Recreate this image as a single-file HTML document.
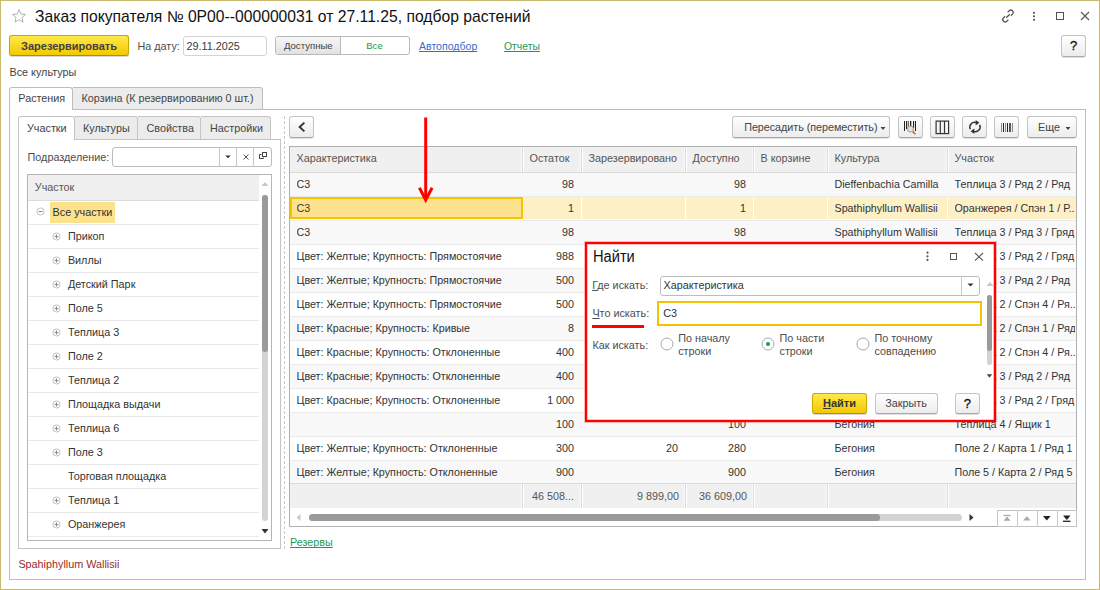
<!DOCTYPE html>
<html><head><meta charset="utf-8"><style>
html,body{margin:0;padding:0;}
body{width:1100px;height:590px;position:relative;overflow:hidden;background:#fff;font-family:"Liberation Sans",sans-serif;}
.b{position:absolute;}
.t{position:absolute;white-space:nowrap;font-family:"Liberation Sans",sans-serif;}
svg.b{overflow:visible;}
</style></head><body>
<div class="b" style="left:0px;top:0px;width:1100px;height:590px;border:1px solid #c8b870;box-sizing:border-box;background:#fff;"></div>
<svg class="b" style="left:11px;top:8px;" width="16" height="16" viewBox="0 0 16 16"><path d="M8 1.6 L9.9 6.1 L14.6 6.4 L11 9.5 L12.1 14.2 L8 11.6 L3.9 14.2 L5 9.5 L1.4 6.4 L6.1 6.1 Z" fill="none" stroke="#aeb3b8" stroke-width="1"/></svg>
<div class="t " style="left:35px;top:8.14px;font-size:15.7px;line-height:18.84px;color:#111;font-weight:normal;">Заказ покупателя № 0P00--000000031 от 27.11.25, подбор растений</div>
<svg class="b" style="left:1000px;top:8px;" width="16" height="16" viewBox="0 0 16 16"><g fill="none" stroke="#555" stroke-width="1.3"><path d="M6.2 9.8 L9.8 6.2"/><path d="M7.6 4.4 L9.2 2.8 a2.3 2.3 0 0 1 3.3 3.3 L10.9 7.7"/><path d="M5.1 8.3 L3.5 9.9 a2.3 2.3 0 0 0 3.3 3.3 L8.4 11.6"/></g></svg>
<svg class="b" style="left:1031px;top:11px;" width="6" height="11" viewBox="0 0 6 11"><g fill="#555"><circle cx="3" cy="1.8" r="1.1"/><circle cx="3" cy="5.3" r="1.1"/><circle cx="3" cy="8.8" r="1.1"/></g></svg>
<div class="b" style="left:1056px;top:12px;width:8px;height:8px;border:1.3px solid #555;box-sizing:border-box;"></div>
<svg class="b" style="left:1080px;top:11px;" width="10" height="10" viewBox="0 0 10 10"><path d="M1 1 L9 9 M9 1 L1 9" stroke="#555" stroke-width="1.1"/></svg>
<div class="b" style="left:9px;top:35px;width:120px;height:21px;background:linear-gradient(#ffe94a,#f2c900);border:1px solid #c9a800;border-bottom-color:#b09000;border-radius:3px;box-shadow:0 1px 0 rgba(0,0,0,0.15);box-sizing:border-box;"></div>
<div class="t" style="left:-131px;width:400px;text-align:center;top:39.59px;font-size:11px;line-height:13.2px;color:#404040;font-weight:bold;">Зарезервировать</div>
<div class="t " style="left:137.5px;top:39.88px;font-size:10.8px;line-height:12.96px;color:#4d4d4d;font-weight:normal;">На дату:</div>
<div class="b" style="left:183px;top:36px;width:84px;height:20px;border:1px solid #d3d3d3;border-radius:3px;box-sizing:border-box;"></div>
<div class="t " style="left:186.6px;top:39.88px;font-size:10.8px;line-height:12.96px;color:#3a3a3a;font-weight:normal;">29.11.2025</div>
<div class="b" style="left:275px;top:36px;width:135px;height:18.5px;border:1px solid #b9b9b9;border-radius:3px;box-sizing:border-box;background:#fff;"></div>
<div class="b" style="left:276px;top:37px;width:64px;height:16.5px;background:linear-gradient(#f7f7f7,#e2e2e2);border-radius:2px 0 0 2px;"></div>
<div class="b" style="left:340px;top:37px;width:1px;height:16.5px;background:#b9b9b9;"></div>
<div class="t" style="left:108.30000000000001px;width:400px;text-align:center;top:40.11px;font-size:9.6px;line-height:11.52px;color:#444;font-weight:normal;">Доступные</div>
<div class="t" style="left:174.5px;width:400px;text-align:center;top:40.11px;font-size:9.6px;line-height:11.52px;color:#22994a;font-weight:normal;">Все</div>
<div class="t " style="left:419px;top:40.41px;font-size:10.55px;line-height:12.66px;color:#3a6bc9;font-weight:normal;text-decoration:underline;text-decoration-skip-ink:none;">Автоподбор</div>
<div class="t " style="left:504px;top:40.56px;font-size:10.4px;line-height:12.48px;color:#1c9955;font-weight:normal;text-decoration:underline;text-decoration-skip-ink:none;">Отчеты</div>
<div class="b" style="left:1061px;top:35px;width:25px;height:21.5px;background:linear-gradient(#ffffff,#ececec);border:1px solid #c4c4c4;border-bottom-color:#a9a9a9;border-radius:3px;box-shadow:0 1px 0 rgba(0,0,0,0.12);box-sizing:border-box;"></div>
<div class="t" style="left:873.7px;width:400px;text-align:center;top:38.30px;font-size:13px;line-height:15.6px;color:#111;font-weight:normal;-webkit-text-stroke:0.3px #111;">?</div>
<div class="t " style="left:9.5px;top:65.78px;font-size:10.8px;line-height:12.96px;color:#444;font-weight:normal;">Все культуры</div>
<div class="b" style="left:9px;top:109px;width:1077px;height:471px;border:1px solid #bdbdbd;box-sizing:border-box;"></div>
<div class="b" style="left:9px;top:87px;width:64px;height:23px;border:1px solid #bdbdbd;border-bottom:none;border-radius:3px 3px 0 0;background:#fff;box-sizing:border-box;"></div>
<div class="b" style="left:73px;top:87px;width:190px;height:23px;border:1px solid #bdbdbd;border-left:none;border-radius:0 3px 0 0;background:#ececec;box-sizing:border-box;"></div>
<div class="t " style="left:18.3px;top:91.78px;font-size:10.8px;line-height:12.96px;color:#444;font-weight:normal;">Растения</div>
<div class="t " style="left:81.5px;top:91.78px;font-size:10.8px;line-height:12.96px;color:#444;font-weight:normal;">Корзина (К резервированию 0 шт.)</div>
<div class="b" style="left:18px;top:139px;width:263px;height:410px;border:1px solid #c4c4c4;box-sizing:border-box;"></div>
<div class="b" style="left:18px;top:116px;width:57px;height:24px;border:1px solid #c4c4c4;border-bottom:none;border-radius:3px 3px 0 0;background:#fff;box-sizing:border-box;"></div>
<div class="b" style="left:75px;top:116px;width:63px;height:23.5px;border:1px solid #c4c4c4;border-left:none;border-radius:0 3px 0 0;background:#ececec;box-sizing:border-box;"></div>
<div class="t " style="left:83px;top:121.58px;font-size:10.8px;line-height:12.96px;color:#444;font-weight:normal;">Культуры</div>
<div class="b" style="left:138px;top:116px;width:63px;height:23.5px;border:1px solid #c4c4c4;border-left:none;border-radius:0 3px 0 0;background:#ececec;box-sizing:border-box;"></div>
<div class="t " style="left:146.5px;top:121.58px;font-size:10.8px;line-height:12.96px;color:#444;font-weight:normal;">Свойства</div>
<div class="b" style="left:201px;top:116px;width:70px;height:23.5px;border:1px solid #c4c4c4;border-left:none;border-radius:0 3px 0 0;background:#ececec;box-sizing:border-box;"></div>
<div class="t " style="left:210px;top:121.58px;font-size:10.8px;line-height:12.96px;color:#444;font-weight:normal;">Настройки</div>
<div class="t " style="left:27px;top:121.58px;font-size:10.8px;line-height:12.96px;color:#444;font-weight:normal;">Участки</div>
<div class="t " style="left:27.6px;top:150.78px;font-size:10.8px;line-height:12.96px;color:#4d4d4d;font-weight:normal;">Подразделение:</div>
<div class="b" style="left:112px;top:146.5px;width:160px;height:20.0px;border:1px solid #bcbcbc;border-radius:3px;box-sizing:border-box;background:#fff;"></div>
<div class="b" style="left:219px;top:147px;width:1px;height:19px;background:#c8c8c8;"></div>
<div class="b" style="left:236px;top:147px;width:1px;height:19px;background:#c8c8c8;"></div>
<div class="b" style="left:253px;top:147px;width:1px;height:19px;background:#c8c8c8;"></div>
<svg class="b" style="left:224.5px;top:155px;" width="6" height="4" viewBox="0 0 6 4"><path d="M0.3 0.5 L5.7 0.5 L3 3.3 Z" fill="#333"/></svg>
<svg class="b" style="left:242.5px;top:153.5px;" width="6" height="6" viewBox="0 0 6 6"><path d="M0.5 0.5 L5.5 5.5 M5.5 0.5 L0.5 5.5" stroke="#555" stroke-width="1"/></svg>
<svg class="b" style="left:259px;top:152px;" width="9" height="8" viewBox="0 0 9 8"><g fill="none" stroke="#444" stroke-width="1"><rect x="3.5" y="0.5" width="4" height="4"/><path d="M2.5 2.5 H0.5 V6.5 H4.5 V5.5"/></g></svg>
<div class="b" style="left:27px;top:174px;width:245px;height:367px;border:1px solid #b5b5b5;box-sizing:border-box;background:#fff;"></div>
<div class="b" style="left:28px;top:175px;width:231px;height:25px;background:#f0f0f0;"></div>
<div class="b" style="left:28px;top:200px;width:231px;height:1px;background:#dcdcdc;"></div>
<div class="t " style="left:34.8px;top:181.18px;font-size:10.8px;line-height:12.96px;color:#555;font-weight:normal;">Участок</div>
<div class="b" style="left:28px;top:224px;width:231px;height:1px;background:#e9e9e9;"></div>
<div class="b" style="left:50px;top:202px;width:65px;height:21px;background:#fce28c;"></div>
<div class="t " style="left:52.6px;top:205.78px;font-size:10.8px;line-height:12.96px;color:#333;font-weight:normal;">Все участки</div>
<svg class="b" style="left:36px;top:207px;" width="9" height="9" viewBox="0 0 9 9"><circle cx="4.5" cy="4.5" r="3.6" fill="#fff" stroke="#c4c4c4" stroke-width="1"/><path d="M2.5 4.5 H6.5" stroke="#8c8c8c" stroke-width="1"/></svg>
<div class="b" style="left:28px;top:248px;width:231px;height:1px;background:#e9e9e9;"></div>
<div class="t " style="left:67.9px;top:229.78px;font-size:10.8px;line-height:12.96px;color:#333;font-weight:normal;">Прикоп</div>
<svg class="b" style="left:52px;top:232px;" width="9" height="9" viewBox="0 0 9 9"><circle cx="4.5" cy="4.5" r="3.6" fill="#fff" stroke="#c4c4c4" stroke-width="1"/><path d="M2.5 4.5 H6.5 M4.5 2.5 V6.5" stroke="#8c8c8c" stroke-width="1"/></svg>
<div class="b" style="left:28px;top:272px;width:231px;height:1px;background:#e9e9e9;"></div>
<div class="t " style="left:67.9px;top:253.78px;font-size:10.8px;line-height:12.96px;color:#333;font-weight:normal;">Виллы</div>
<svg class="b" style="left:52px;top:256px;" width="9" height="9" viewBox="0 0 9 9"><circle cx="4.5" cy="4.5" r="3.6" fill="#fff" stroke="#c4c4c4" stroke-width="1"/><path d="M2.5 4.5 H6.5 M4.5 2.5 V6.5" stroke="#8c8c8c" stroke-width="1"/></svg>
<div class="b" style="left:28px;top:296px;width:231px;height:1px;background:#e9e9e9;"></div>
<div class="t " style="left:67.9px;top:277.78px;font-size:10.8px;line-height:12.96px;color:#333;font-weight:normal;">Детский Парк</div>
<svg class="b" style="left:52px;top:280px;" width="9" height="9" viewBox="0 0 9 9"><circle cx="4.5" cy="4.5" r="3.6" fill="#fff" stroke="#c4c4c4" stroke-width="1"/><path d="M2.5 4.5 H6.5 M4.5 2.5 V6.5" stroke="#8c8c8c" stroke-width="1"/></svg>
<div class="b" style="left:28px;top:320px;width:231px;height:1px;background:#e9e9e9;"></div>
<div class="t " style="left:67.9px;top:301.78px;font-size:10.8px;line-height:12.96px;color:#333;font-weight:normal;">Поле 5</div>
<svg class="b" style="left:52px;top:304px;" width="9" height="9" viewBox="0 0 9 9"><circle cx="4.5" cy="4.5" r="3.6" fill="#fff" stroke="#c4c4c4" stroke-width="1"/><path d="M2.5 4.5 H6.5 M4.5 2.5 V6.5" stroke="#8c8c8c" stroke-width="1"/></svg>
<div class="b" style="left:28px;top:344px;width:231px;height:1px;background:#e9e9e9;"></div>
<div class="t " style="left:67.9px;top:325.78px;font-size:10.8px;line-height:12.96px;color:#333;font-weight:normal;">Теплица 3</div>
<svg class="b" style="left:52px;top:328px;" width="9" height="9" viewBox="0 0 9 9"><circle cx="4.5" cy="4.5" r="3.6" fill="#fff" stroke="#c4c4c4" stroke-width="1"/><path d="M2.5 4.5 H6.5 M4.5 2.5 V6.5" stroke="#8c8c8c" stroke-width="1"/></svg>
<div class="b" style="left:28px;top:368px;width:231px;height:1px;background:#e9e9e9;"></div>
<div class="t " style="left:67.9px;top:349.78px;font-size:10.8px;line-height:12.96px;color:#333;font-weight:normal;">Поле 2</div>
<svg class="b" style="left:52px;top:352px;" width="9" height="9" viewBox="0 0 9 9"><circle cx="4.5" cy="4.5" r="3.6" fill="#fff" stroke="#c4c4c4" stroke-width="1"/><path d="M2.5 4.5 H6.5 M4.5 2.5 V6.5" stroke="#8c8c8c" stroke-width="1"/></svg>
<div class="b" style="left:28px;top:392px;width:231px;height:1px;background:#e9e9e9;"></div>
<div class="t " style="left:67.9px;top:373.78px;font-size:10.8px;line-height:12.96px;color:#333;font-weight:normal;">Теплица 2</div>
<svg class="b" style="left:52px;top:376px;" width="9" height="9" viewBox="0 0 9 9"><circle cx="4.5" cy="4.5" r="3.6" fill="#fff" stroke="#c4c4c4" stroke-width="1"/><path d="M2.5 4.5 H6.5 M4.5 2.5 V6.5" stroke="#8c8c8c" stroke-width="1"/></svg>
<div class="b" style="left:28px;top:416px;width:231px;height:1px;background:#e9e9e9;"></div>
<div class="t " style="left:67.9px;top:397.78px;font-size:10.8px;line-height:12.96px;color:#333;font-weight:normal;">Площадка выдачи</div>
<svg class="b" style="left:52px;top:400px;" width="9" height="9" viewBox="0 0 9 9"><circle cx="4.5" cy="4.5" r="3.6" fill="#fff" stroke="#c4c4c4" stroke-width="1"/><path d="M2.5 4.5 H6.5 M4.5 2.5 V6.5" stroke="#8c8c8c" stroke-width="1"/></svg>
<div class="b" style="left:28px;top:440px;width:231px;height:1px;background:#e9e9e9;"></div>
<div class="t " style="left:67.9px;top:421.78px;font-size:10.8px;line-height:12.96px;color:#333;font-weight:normal;">Теплица 6</div>
<svg class="b" style="left:52px;top:424px;" width="9" height="9" viewBox="0 0 9 9"><circle cx="4.5" cy="4.5" r="3.6" fill="#fff" stroke="#c4c4c4" stroke-width="1"/><path d="M2.5 4.5 H6.5 M4.5 2.5 V6.5" stroke="#8c8c8c" stroke-width="1"/></svg>
<div class="b" style="left:28px;top:464px;width:231px;height:1px;background:#e9e9e9;"></div>
<div class="t " style="left:67.9px;top:445.78px;font-size:10.8px;line-height:12.96px;color:#333;font-weight:normal;">Поле 3</div>
<svg class="b" style="left:52px;top:448px;" width="9" height="9" viewBox="0 0 9 9"><circle cx="4.5" cy="4.5" r="3.6" fill="#fff" stroke="#c4c4c4" stroke-width="1"/><path d="M2.5 4.5 H6.5 M4.5 2.5 V6.5" stroke="#8c8c8c" stroke-width="1"/></svg>
<div class="b" style="left:28px;top:488px;width:231px;height:1px;background:#e9e9e9;"></div>
<div class="t " style="left:67.9px;top:469.78px;font-size:10.8px;line-height:12.96px;color:#333;font-weight:normal;">Торговая площадка</div>
<div class="b" style="left:28px;top:512px;width:231px;height:1px;background:#e9e9e9;"></div>
<div class="t " style="left:67.9px;top:493.78px;font-size:10.8px;line-height:12.96px;color:#333;font-weight:normal;">Теплица 1</div>
<svg class="b" style="left:52px;top:496px;" width="9" height="9" viewBox="0 0 9 9"><circle cx="4.5" cy="4.5" r="3.6" fill="#fff" stroke="#c4c4c4" stroke-width="1"/><path d="M2.5 4.5 H6.5 M4.5 2.5 V6.5" stroke="#8c8c8c" stroke-width="1"/></svg>
<div class="b" style="left:28px;top:536px;width:231px;height:1px;background:#e9e9e9;"></div>
<div class="t " style="left:67.9px;top:517.78px;font-size:10.8px;line-height:12.96px;color:#333;font-weight:normal;">Оранжерея</div>
<svg class="b" style="left:52px;top:520px;" width="9" height="9" viewBox="0 0 9 9"><circle cx="4.5" cy="4.5" r="3.6" fill="#fff" stroke="#c4c4c4" stroke-width="1"/><path d="M2.5 4.5 H6.5 M4.5 2.5 V6.5" stroke="#8c8c8c" stroke-width="1"/></svg>
<svg class="b" style="left:261px;top:181px;" width="8" height="6" viewBox="0 0 8 6"><path d="M0.5 5 L4 1 L7.5 5 Z" fill="#c8c8c8"/></svg>
<div class="b" style="left:262px;top:195px;width:6px;height:326px;background:#d3d3d3;border-radius:3px;"></div>
<div class="b" style="left:262px;top:195px;width:6px;height:157px;background:#9a9a9a;border-radius:3px;"></div>
<svg class="b" style="left:261px;top:529px;" width="8" height="5" viewBox="0 0 8 5"><path d="M0.5 0 L7.5 0 L4 4.5 Z" fill="#333"/></svg>
<div class="b" style="left:284px;top:116px;width:1px;height:435px;background:repeating-linear-gradient(#c8c8c8 0 3px, transparent 3px 5px);"></div>
<div class="b" style="left:289px;top:116px;width:25px;height:22px;background:linear-gradient(#ffffff,#ececec);border:1px solid #c4c4c4;border-bottom-color:#a9a9a9;border-radius:3px;box-shadow:0 1px 0 rgba(0,0,0,0.12);box-sizing:border-box;"></div>
<svg class="b" style="left:296px;top:120px;" width="12" height="14" viewBox="0 0 12 14"><path d="M8.4 2.6 L3.6 7 L8.4 11.4" fill="none" stroke="#333" stroke-width="1.9"/></svg>
<div class="b" style="left:732px;top:116px;width:158px;height:22px;background:linear-gradient(#ffffff,#ececec);border:1px solid #c4c4c4;border-bottom-color:#a9a9a9;border-radius:3px;box-shadow:0 1px 0 rgba(0,0,0,0.12);box-sizing:border-box;"></div>
<div class="t " style="left:744.2px;top:121.28px;font-size:10.8px;line-height:12.96px;color:#444;font-weight:normal;letter-spacing:-0.05px;">Пересадить (переместить)</div>
<svg class="b" style="left:880px;top:127px;" width="6" height="4" viewBox="0 0 6 4"><path d="M0.5 0 L5.5 0 L3 3 Z" fill="#444"/></svg>
<div class="b" style="left:898px;top:116px;width:25px;height:22px;background:linear-gradient(#ffffff,#ececec);border:1px solid #c4c4c4;border-bottom-color:#a9a9a9;border-radius:3px;box-shadow:0 1px 0 rgba(0,0,0,0.12);box-sizing:border-box;"></div>
<div class="b" style="left:930px;top:116px;width:25px;height:22px;background:linear-gradient(#ffffff,#ececec);border:1px solid #c4c4c4;border-bottom-color:#a9a9a9;border-radius:3px;box-shadow:0 1px 0 rgba(0,0,0,0.12);box-sizing:border-box;"></div>
<div class="b" style="left:962px;top:116px;width:25px;height:22px;background:linear-gradient(#ffffff,#ececec);border:1px solid #c4c4c4;border-bottom-color:#a9a9a9;border-radius:3px;box-shadow:0 1px 0 rgba(0,0,0,0.12);box-sizing:border-box;"></div>
<div class="b" style="left:994px;top:116px;width:25px;height:22px;background:linear-gradient(#ffffff,#ececec);border:1px solid #c4c4c4;border-bottom-color:#a9a9a9;border-radius:3px;box-shadow:0 1px 0 rgba(0,0,0,0.12);box-sizing:border-box;"></div>
<div class="b" style="left:1027px;top:116px;width:50px;height:22px;background:linear-gradient(#ffffff,#ececec);border:1px solid #c4c4c4;border-bottom-color:#a9a9a9;border-radius:3px;box-shadow:0 1px 0 rgba(0,0,0,0.12);box-sizing:border-box;"></div>
<div class="t " style="left:1038px;top:121.28px;font-size:10.8px;line-height:12.96px;color:#444;font-weight:normal;">Еще</div>
<svg class="b" style="left:1065px;top:127px;" width="6" height="4" viewBox="0 0 6 4"><path d="M0.5 0 L5.5 0 L3 3 Z" fill="#444"/></svg>
<svg class="b" style="left:900px;top:118px;" width="20" height="18" viewBox="0 0 20 18"><g fill="#222"><rect x="4" y="3" width="1" height="10"/><rect x="6" y="3" width="1.2" height="8"/><rect x="8" y="3" width="0.9" height="6" fill="#555"/><rect x="10" y="3" width="1.3" height="5"/><rect x="13" y="3" width="1.1" height="7"/><rect x="15" y="3" width="1" height="10"/></g><path d="M12.6 13.2 L14.8 15.6" stroke="#c08050" stroke-width="2" stroke-linecap="round"/><circle cx="10.5" cy="11.1" r="2.9" fill="#d6e6ff" stroke="#c9a07a" stroke-width="1.1"/></svg>
<svg class="b" style="left:935px;top:120px;" width="15" height="15" viewBox="0 0 15 15"><g fill="none" stroke="#333" stroke-width="1.2"><rect x="1.1" y="1.1" width="12.5" height="12.5"/><path d="M5.3 1 V13.6 M9.5 1 V13.6"/></g></svg>
<svg class="b" style="left:966.5px;top:119px;" width="16" height="16" viewBox="0 0 16 16"><g fill="none" stroke="#333" stroke-width="1.5"><path d="M3.4 10.2 A4.7 4.7 0 0 1 9.2 3.6"/><path d="M12.6 5.8 A4.7 4.7 0 0 1 6.8 12.4"/></g><path d="M8.6 1 L12.4 3.7 L8.6 6.4 Z" fill="#333"/><path d="M7.4 9.6 L3.6 12.3 L7.4 15 Z" fill="#333"/></svg>
<svg class="b" style="left:996px;top:118px;" width="20" height="18" viewBox="0 0 20 18"><g><rect x="5" y="5" width="1" height="9" fill="#888"/><rect x="7" y="5" width="1" height="9" fill="#222"/><rect x="9" y="5" width="1" height="9" fill="#888"/><rect x="11" y="5" width="1" height="9" fill="#222"/><rect x="13" y="5" width="2" height="9" fill="#555"/><rect x="16" y="5" width="1" height="9" fill="#888"/></g></svg>
<div class="b" style="left:289px;top:146px;width:788px;height:381px;border:1px solid #b0b0b0;box-sizing:border-box;background:#fff;"></div>
<div class="b" style="left:290px;top:147px;width:786px;height:25px;background:#f0f0f0;"></div>
<div class="b" style="left:290px;top:172px;width:786px;height:1px;background:#d9d9d9;"></div>
<div class="b" style="left:521px;top:147px;width:1px;height:25px;background:#f8f8f8;"></div>
<div class="b" style="left:522px;top:147px;width:1px;height:25px;background:#dcdcdc;"></div>
<div class="b" style="left:523px;top:147px;width:1px;height:25px;background:#fff;"></div>
<div class="b" style="left:580px;top:147px;width:1px;height:25px;background:#f8f8f8;"></div>
<div class="b" style="left:581px;top:147px;width:1px;height:25px;background:#dcdcdc;"></div>
<div class="b" style="left:582px;top:147px;width:1px;height:25px;background:#fff;"></div>
<div class="b" style="left:684px;top:147px;width:1px;height:25px;background:#f8f8f8;"></div>
<div class="b" style="left:685px;top:147px;width:1px;height:25px;background:#dcdcdc;"></div>
<div class="b" style="left:686px;top:147px;width:1px;height:25px;background:#fff;"></div>
<div class="b" style="left:752px;top:147px;width:1px;height:25px;background:#f8f8f8;"></div>
<div class="b" style="left:753px;top:147px;width:1px;height:25px;background:#dcdcdc;"></div>
<div class="b" style="left:754px;top:147px;width:1px;height:25px;background:#fff;"></div>
<div class="b" style="left:826px;top:147px;width:1px;height:25px;background:#f8f8f8;"></div>
<div class="b" style="left:827px;top:147px;width:1px;height:25px;background:#dcdcdc;"></div>
<div class="b" style="left:828px;top:147px;width:1px;height:25px;background:#fff;"></div>
<div class="b" style="left:946px;top:147px;width:1px;height:25px;background:#f8f8f8;"></div>
<div class="b" style="left:947px;top:147px;width:1px;height:25px;background:#dcdcdc;"></div>
<div class="b" style="left:948px;top:147px;width:1px;height:25px;background:#fff;"></div>
<div class="t " style="left:296.5px;top:152.18px;font-size:10.8px;line-height:12.96px;color:#555;font-weight:normal;">Характеристика</div>
<div class="t " style="left:529.5px;top:152.18px;font-size:10.8px;line-height:12.96px;color:#555;font-weight:normal;">Остаток</div>
<div class="t " style="left:588.5px;top:152.18px;font-size:10.8px;line-height:12.96px;color:#555;font-weight:normal;">Зарезервировано</div>
<div class="t " style="left:692.5px;top:152.18px;font-size:10.8px;line-height:12.96px;color:#555;font-weight:normal;">Доступно</div>
<div class="t " style="left:760.5px;top:152.18px;font-size:10.8px;line-height:12.96px;color:#555;font-weight:normal;">В корзине</div>
<div class="t " style="left:834.5px;top:152.18px;font-size:10.8px;line-height:12.96px;color:#555;font-weight:normal;">Культура</div>
<div class="t " style="left:954.5px;top:152.18px;font-size:10.8px;line-height:12.96px;color:#555;font-weight:normal;">Участок</div>
<div class="b" style="left:290px;top:173px;width:786px;height:311px;overflow:hidden;">
<div class="b" style="left:0px;top:0px;width:786px;height:23px;background:#f8f8f8;"></div>
<div class="b" style="left:0px;top:23px;width:786px;height:1px;background:#ebebeb;"></div>
<div class="t" style="left:6.5px;width:225px;overflow:hidden;top:4.59px;font-size:10.72px;line-height:12.8px;color:#333;">C3</div>
<div class="t" style="left:233px;width:51px;text-align:right;top:4.59px;font-size:10.72px;line-height:12.8px;color:#333;">98</div>
<div class="t" style="left:396px;width:60px;text-align:right;top:4.59px;font-size:10.72px;line-height:12.8px;color:#333;">98</div>
<div class="t" style="left:544.5px;width:112px;overflow:hidden;top:4.59px;font-size:10.72px;line-height:12.8px;color:#333;">Dieffenbachia Camilla</div>
<div class="t" style="left:664.5px;width:120px;overflow:hidden;top:4.59px;font-size:10.72px;line-height:12.8px;color:#333;">Теплица 3 / Ряд 2 / Ряд</div>
<div class="b" style="left:0px;top:24px;width:786px;height:22px;background:#fdf0c6;"></div>
<div class="b" style="left:0px;top:46px;width:786px;height:1px;background:#fff;"></div>
<div class="b" style="left:232px;top:24px;width:1px;height:22px;background:#fff;"></div>
<div class="b" style="left:291px;top:24px;width:1px;height:22px;background:#fff;"></div>
<div class="b" style="left:395px;top:24px;width:1px;height:22px;background:#fff;"></div>
<div class="b" style="left:463px;top:24px;width:1px;height:22px;background:#fff;"></div>
<div class="b" style="left:537px;top:24px;width:1px;height:22px;background:#fff;"></div>
<div class="b" style="left:657px;top:24px;width:1px;height:22px;background:#fff;"></div>
<div class="b" style="left:0px;top:24px;width:233px;height:22px;background:#fde38f;border:2px solid #f5c400;box-sizing:border-box;"></div>
<div class="b" style="left:0px;top:47px;width:786px;height:1px;background:#ebebeb;"></div>
<div class="t" style="left:6.5px;width:225px;overflow:hidden;top:28.59px;font-size:10.72px;line-height:12.8px;color:#333;">C3</div>
<div class="t" style="left:233px;width:51px;text-align:right;top:28.59px;font-size:10.72px;line-height:12.8px;color:#333;">1</div>
<div class="t" style="left:396px;width:60px;text-align:right;top:28.59px;font-size:10.72px;line-height:12.8px;color:#333;">1</div>
<div class="t" style="left:544.5px;width:112px;overflow:hidden;top:28.59px;font-size:10.72px;line-height:12.8px;color:#333;">Spathiphyllum Wallisii</div>
<div class="t" style="left:664.5px;width:120px;overflow:hidden;top:28.59px;font-size:10.72px;line-height:12.8px;color:#333;">Оранжерея / Спэн 1 / Р...</div>
<div class="b" style="left:0px;top:48px;width:786px;height:23px;background:#f8f8f8;"></div>
<div class="b" style="left:0px;top:71px;width:786px;height:1px;background:#ebebeb;"></div>
<div class="t" style="left:6.5px;width:225px;overflow:hidden;top:52.59px;font-size:10.72px;line-height:12.8px;color:#333;">C3</div>
<div class="t" style="left:233px;width:51px;text-align:right;top:52.59px;font-size:10.72px;line-height:12.8px;color:#333;">98</div>
<div class="t" style="left:396px;width:60px;text-align:right;top:52.59px;font-size:10.72px;line-height:12.8px;color:#333;">98</div>
<div class="t" style="left:544.5px;width:112px;overflow:hidden;top:52.59px;font-size:10.72px;line-height:12.8px;color:#333;">Spathiphyllum Wallisii</div>
<div class="t" style="left:664.5px;width:120px;overflow:hidden;top:52.59px;font-size:10.72px;line-height:12.8px;color:#333;">Теплица 3 / Ряд 3 / Гряд</div>
<div class="b" style="left:0px;top:72px;width:786px;height:23px;background:#ffffff;"></div>
<div class="b" style="left:0px;top:95px;width:786px;height:1px;background:#ebebeb;"></div>
<div class="t" style="left:6.5px;width:225px;overflow:hidden;top:76.59px;font-size:10.72px;line-height:12.8px;color:#333;">Цвет: Желтые; Крупность: Прямостоячие</div>
<div class="t" style="left:233px;width:51px;text-align:right;top:76.59px;font-size:10.72px;line-height:12.8px;color:#333;">988</div>
<div class="t" style="left:396px;width:60px;text-align:right;top:76.59px;font-size:10.72px;line-height:12.8px;color:#333;">988</div>
<div class="t" style="left:544.5px;width:112px;overflow:hidden;top:76.59px;font-size:10.72px;line-height:12.8px;color:#333;">Spathiphyllum Wallisii</div>
<div class="t" style="left:664.5px;width:120px;overflow:hidden;top:76.59px;font-size:10.72px;line-height:12.8px;color:#333;">Теплица 3 / Ряд 2 / Гряд</div>
<div class="b" style="left:0px;top:96px;width:786px;height:23px;background:#f8f8f8;"></div>
<div class="b" style="left:0px;top:119px;width:786px;height:1px;background:#ebebeb;"></div>
<div class="t" style="left:6.5px;width:225px;overflow:hidden;top:100.59px;font-size:10.72px;line-height:12.8px;color:#333;">Цвет: Желтые; Крупность: Прямостоячие</div>
<div class="t" style="left:233px;width:51px;text-align:right;top:100.59px;font-size:10.72px;line-height:12.8px;color:#333;">500</div>
<div class="t" style="left:396px;width:60px;text-align:right;top:100.59px;font-size:10.72px;line-height:12.8px;color:#333;">500</div>
<div class="t" style="left:544.5px;width:112px;overflow:hidden;top:100.59px;font-size:10.72px;line-height:12.8px;color:#333;">Spathiphyllum Wallisii</div>
<div class="t" style="left:664.5px;width:120px;overflow:hidden;top:100.59px;font-size:10.72px;line-height:12.8px;color:#333;">Теплица 3 / Ряд 2 / Ряд</div>
<div class="b" style="left:0px;top:120px;width:786px;height:23px;background:#ffffff;"></div>
<div class="b" style="left:0px;top:143px;width:786px;height:1px;background:#ebebeb;"></div>
<div class="t" style="left:6.5px;width:225px;overflow:hidden;top:124.59px;font-size:10.72px;line-height:12.8px;color:#333;">Цвет: Желтые; Крупность: Прямостоячие</div>
<div class="t" style="left:233px;width:51px;text-align:right;top:124.59px;font-size:10.72px;line-height:12.8px;color:#333;">500</div>
<div class="t" style="left:396px;width:60px;text-align:right;top:124.59px;font-size:10.72px;line-height:12.8px;color:#333;">500</div>
<div class="t" style="left:544.5px;width:112px;overflow:hidden;top:124.59px;font-size:10.72px;line-height:12.8px;color:#333;">Spathiphyllum Wallisii</div>
<div class="t" style="left:664.5px;width:120px;overflow:hidden;top:124.59px;font-size:10.72px;line-height:12.8px;color:#333;">Теплица 2 / Спэн 4 / Ря...</div>
<div class="b" style="left:0px;top:144px;width:786px;height:23px;background:#f8f8f8;"></div>
<div class="b" style="left:0px;top:167px;width:786px;height:1px;background:#ebebeb;"></div>
<div class="t" style="left:6.5px;width:225px;overflow:hidden;top:148.59px;font-size:10.72px;line-height:12.8px;color:#333;">Цвет: Красные; Крупность: Кривые</div>
<div class="t" style="left:233px;width:51px;text-align:right;top:148.59px;font-size:10.72px;line-height:12.8px;color:#333;">8</div>
<div class="t" style="left:396px;width:60px;text-align:right;top:148.59px;font-size:10.72px;line-height:12.8px;color:#333;">8</div>
<div class="t" style="left:544.5px;width:112px;overflow:hidden;top:148.59px;font-size:10.72px;line-height:12.8px;color:#333;">Spathiphyllum Wallisii</div>
<div class="t" style="left:664.5px;width:120px;overflow:hidden;top:148.59px;font-size:10.72px;line-height:12.8px;color:#333;">Теплица 2 / Спэн 1 / Ряд</div>
<div class="b" style="left:0px;top:168px;width:786px;height:23px;background:#ffffff;"></div>
<div class="b" style="left:0px;top:191px;width:786px;height:1px;background:#ebebeb;"></div>
<div class="t" style="left:6.5px;width:225px;overflow:hidden;top:172.59px;font-size:10.72px;line-height:12.8px;color:#333;">Цвет: Красные; Крупность: Отклоненные</div>
<div class="t" style="left:233px;width:51px;text-align:right;top:172.59px;font-size:10.72px;line-height:12.8px;color:#333;">400</div>
<div class="t" style="left:396px;width:60px;text-align:right;top:172.59px;font-size:10.72px;line-height:12.8px;color:#333;">400</div>
<div class="t" style="left:544.5px;width:112px;overflow:hidden;top:172.59px;font-size:10.72px;line-height:12.8px;color:#333;">Spathiphyllum Wallisii</div>
<div class="t" style="left:664.5px;width:120px;overflow:hidden;top:172.59px;font-size:10.72px;line-height:12.8px;color:#333;">Теплица 2 / Спэн 4 / Ря...</div>
<div class="b" style="left:0px;top:192px;width:786px;height:23px;background:#f8f8f8;"></div>
<div class="b" style="left:0px;top:215px;width:786px;height:1px;background:#ebebeb;"></div>
<div class="t" style="left:6.5px;width:225px;overflow:hidden;top:196.59px;font-size:10.72px;line-height:12.8px;color:#333;">Цвет: Красные; Крупность: Отклоненные</div>
<div class="t" style="left:233px;width:51px;text-align:right;top:196.59px;font-size:10.72px;line-height:12.8px;color:#333;">400</div>
<div class="t" style="left:396px;width:60px;text-align:right;top:196.59px;font-size:10.72px;line-height:12.8px;color:#333;">400</div>
<div class="t" style="left:544.5px;width:112px;overflow:hidden;top:196.59px;font-size:10.72px;line-height:12.8px;color:#333;">Spathiphyllum Wallisii</div>
<div class="t" style="left:664.5px;width:120px;overflow:hidden;top:196.59px;font-size:10.72px;line-height:12.8px;color:#333;">Теплица 3 / Ряд 2 / Ряд</div>
<div class="b" style="left:0px;top:216px;width:786px;height:23px;background:#ffffff;"></div>
<div class="b" style="left:0px;top:239px;width:786px;height:1px;background:#ebebeb;"></div>
<div class="t" style="left:6.5px;width:225px;overflow:hidden;top:220.59px;font-size:10.72px;line-height:12.8px;color:#333;">Цвет: Красные; Крупность: Отклоненные</div>
<div class="t" style="left:233px;width:51px;text-align:right;top:220.59px;font-size:10.72px;line-height:12.8px;color:#333;">1 000</div>
<div class="t" style="left:396px;width:60px;text-align:right;top:220.59px;font-size:10.72px;line-height:12.8px;color:#333;">1 000</div>
<div class="t" style="left:544.5px;width:112px;overflow:hidden;top:220.59px;font-size:10.72px;line-height:12.8px;color:#333;">Spathiphyllum Wallisii</div>
<div class="t" style="left:664.5px;width:120px;overflow:hidden;top:220.59px;font-size:10.72px;line-height:12.8px;color:#333;">Теплица 3 / Ряд 2 / Гряд</div>
<div class="b" style="left:0px;top:240px;width:786px;height:23px;background:#f8f8f8;"></div>
<div class="b" style="left:0px;top:263px;width:786px;height:1px;background:#ebebeb;"></div>
<div class="t" style="left:233px;width:51px;text-align:right;top:244.59px;font-size:10.72px;line-height:12.8px;color:#333;">100</div>
<div class="t" style="left:396px;width:60px;text-align:right;top:244.59px;font-size:10.72px;line-height:12.8px;color:#333;">100</div>
<div class="t" style="left:544.5px;width:112px;overflow:hidden;top:244.59px;font-size:10.72px;line-height:12.8px;color:#333;">Бегония</div>
<div class="t" style="left:664.5px;width:120px;overflow:hidden;top:244.59px;font-size:10.72px;line-height:12.8px;color:#333;">Теплица 4 / Ящик 1</div>
<div class="b" style="left:0px;top:264px;width:786px;height:23px;background:#ffffff;"></div>
<div class="b" style="left:0px;top:287px;width:786px;height:1px;background:#ebebeb;"></div>
<div class="t" style="left:6.5px;width:225px;overflow:hidden;top:268.59px;font-size:10.72px;line-height:12.8px;color:#333;">Цвет: Желтые; Крупность: Отклоненные</div>
<div class="t" style="left:233px;width:51px;text-align:right;top:268.59px;font-size:10.72px;line-height:12.8px;color:#333;">300</div>
<div class="t" style="left:292px;width:96px;text-align:right;top:268.59px;font-size:10.72px;line-height:12.8px;color:#333;">20</div>
<div class="t" style="left:396px;width:60px;text-align:right;top:268.59px;font-size:10.72px;line-height:12.8px;color:#333;">280</div>
<div class="t" style="left:544.5px;width:112px;overflow:hidden;top:268.59px;font-size:10.72px;line-height:12.8px;color:#333;">Бегония</div>
<div class="t" style="left:664.5px;width:120px;overflow:hidden;top:268.59px;font-size:10.72px;line-height:12.8px;color:#333;">Поле 2 / Карта 1 / Ряд 1</div>
<div class="b" style="left:0px;top:288px;width:786px;height:23px;background:#f8f8f8;"></div>
<div class="b" style="left:0px;top:311px;width:786px;height:1px;background:#ebebeb;"></div>
<div class="t" style="left:6.5px;width:225px;overflow:hidden;top:292.59px;font-size:10.72px;line-height:12.8px;color:#333;">Цвет: Желтые; Крупность: Отклоненные</div>
<div class="t" style="left:233px;width:51px;text-align:right;top:292.59px;font-size:10.72px;line-height:12.8px;color:#333;">900</div>
<div class="t" style="left:396px;width:60px;text-align:right;top:292.59px;font-size:10.72px;line-height:12.8px;color:#333;">900</div>
<div class="t" style="left:544.5px;width:112px;overflow:hidden;top:292.59px;font-size:10.72px;line-height:12.8px;color:#333;">Бегония</div>
<div class="t" style="left:664.5px;width:120px;overflow:hidden;top:292.59px;font-size:10.72px;line-height:12.8px;color:#333;">Поле 5 / Карта 2 / Ряд 5</div>
</div>
<div class="b" style="left:290px;top:483px;width:786px;height:1px;background:#dadada;"></div>
<div class="b" style="left:290px;top:484px;width:786px;height:24px;background:#f0f0f0;"></div>
<div class="b" style="left:521px;top:484px;width:1px;height:24px;background:#f8f8f8;"></div>
<div class="b" style="left:522px;top:484px;width:1px;height:24px;background:#dcdcdc;"></div>
<div class="b" style="left:523px;top:484px;width:1px;height:24px;background:#fff;"></div>
<div class="b" style="left:580px;top:484px;width:1px;height:24px;background:#f8f8f8;"></div>
<div class="b" style="left:581px;top:484px;width:1px;height:24px;background:#dcdcdc;"></div>
<div class="b" style="left:582px;top:484px;width:1px;height:24px;background:#fff;"></div>
<div class="b" style="left:684px;top:484px;width:1px;height:24px;background:#f8f8f8;"></div>
<div class="b" style="left:685px;top:484px;width:1px;height:24px;background:#dcdcdc;"></div>
<div class="b" style="left:686px;top:484px;width:1px;height:24px;background:#fff;"></div>
<div class="b" style="left:752px;top:484px;width:1px;height:24px;background:#f8f8f8;"></div>
<div class="b" style="left:753px;top:484px;width:1px;height:24px;background:#dcdcdc;"></div>
<div class="b" style="left:754px;top:484px;width:1px;height:24px;background:#fff;"></div>
<div class="b" style="left:826px;top:484px;width:1px;height:24px;background:#f8f8f8;"></div>
<div class="b" style="left:827px;top:484px;width:1px;height:24px;background:#dcdcdc;"></div>
<div class="b" style="left:828px;top:484px;width:1px;height:24px;background:#fff;"></div>
<div class="b" style="left:946px;top:484px;width:1px;height:24px;background:#f8f8f8;"></div>
<div class="b" style="left:947px;top:484px;width:1px;height:24px;background:#dcdcdc;"></div>
<div class="b" style="left:948px;top:484px;width:1px;height:24px;background:#fff;"></div>
<div class="t" style="right:526px;top:489.78px;font-size:10.8px;line-height:12.96px;color:#555;font-weight:normal;">46 508...</div>
<div class="t" style="right:421px;top:489.78px;font-size:10.8px;line-height:12.96px;color:#555;font-weight:normal;">9 899,00</div>
<div class="t" style="right:353px;top:489.78px;font-size:10.8px;line-height:12.96px;color:#555;font-weight:normal;">36 609,00</div>
<svg class="b" style="left:296px;top:514px;" width="5" height="7" viewBox="0 0 5 7"><path d="M4.5 0 L4.5 7 L0.5 3.5 Z" fill="#c8c8c8"/></svg>
<div class="b" style="left:308.5px;top:514px;width:653.5px;height:7px;background:#d3d3d3;border-radius:3.5px;"></div>
<div class="b" style="left:308.5px;top:514px;width:571.5px;height:7px;background:#9a9a9a;border-radius:3.5px;"></div>
<svg class="b" style="left:969px;top:514px;" width="5" height="7" viewBox="0 0 5 7"><path d="M0.5 0 L0.5 7 L4.5 3.5 Z" fill="#333"/></svg>
<div class="b" style="left:997px;top:509.5px;width:80px;height:17.5px;border:1px solid #c4c4c4;box-sizing:border-box;background:#fff;"></div>
<div class="b" style="left:1017px;top:510px;width:1px;height:16px;background:#c8c8c8;"></div>
<div class="b" style="left:1036.5px;top:510px;width:1.0px;height:16px;background:#c8c8c8;"></div>
<div class="b" style="left:1056.5px;top:510px;width:1.0px;height:16px;background:#c8c8c8;"></div>
<svg class="b" style="left:1000px;top:513px;" width="14" height="10" viewBox="0 0 14 10"><path d="M3.5 2.5 H10.5" stroke="#aaa" stroke-width="1.3"/><path d="M3.5 7.8 L7 3.6 L10.5 7.8 Z" fill="#aaa"/></svg>
<svg class="b" style="left:1020px;top:513px;" width="14" height="10" viewBox="0 0 14 10"><path d="M3 7.6 L6.8 3.2 L10.6 7.6 Z" fill="#aaa"/></svg>
<svg class="b" style="left:1040px;top:513px;" width="14" height="10" viewBox="0 0 14 10"><path d="M3 3 L10.6 3 L6.8 7.6 Z" fill="#222"/></svg>
<svg class="b" style="left:1060px;top:513px;" width="14" height="10" viewBox="0 0 14 10"><path d="M3 2.6 L10.5 2.6 L6.8 7 Z" fill="#222"/><path d="M3 8.3 H10.5" stroke="#222" stroke-width="1.3"/></svg>
<div class="t " style="left:290px;top:535.98px;font-size:10.8px;line-height:12.96px;color:#1c9955;font-weight:normal;text-decoration:underline;text-decoration-skip-ink:none;">Резервы</div>
<div class="t " style="left:18.4px;top:558.28px;font-size:10.8px;line-height:12.96px;color:#9a2b2b;font-weight:normal;">Spahiphyllum Wallisii</div>
<svg class="b" style="left:415px;top:115px;" width="22" height="90" viewBox="0 0 22 90"><path d="M10.7 2.5 V83" stroke="#f00" stroke-width="3"/><path d="M4.4 72.8 L10.7 85 L17.1 72.8" fill="none" stroke="#f00" stroke-width="3"/></svg>
<div class="b" style="left:585px;top:242px;width:411px;height:180px;background:#fff;border:2px solid #f00;box-sizing:border-box;box-shadow:0 0 0 0.6px rgba(255,0,0,0.45), inset 0 0 0 0.6px rgba(255,0,0,0.45);"></div>
<div class="t " style="left:592.9px;top:247.06px;font-size:16px;line-height:19.2px;color:#111;font-weight:normal;transform:scaleX(0.915);transform-origin:0 0;">Найти</div>
<svg class="b" style="left:924px;top:251px;" width="7" height="11" viewBox="0 0 7 11"><g fill="#555"><circle cx="3.5" cy="1.7" r="1.1"/><circle cx="3.5" cy="5.3" r="1.1"/><circle cx="3.5" cy="8.9" r="1.1"/></g></svg>
<div class="b" style="left:949.5px;top:252.5px;width:7.5px;height:7.5px;border:1.2px solid #555;box-sizing:border-box;"></div>
<svg class="b" style="left:974px;top:252px;" width="10" height="10" viewBox="0 0 10 10"><path d="M1 1 L9 8.6 M9 1 L1 8.6" stroke="#555" stroke-width="1.1"/></svg>
<div class="t " style="left:592.2px;top:279.28px;font-size:10.8px;line-height:12.96px;color:#4d4d4d;font-weight:normal;"><u>Г</u>де искать:</div>
<div class="b" style="left:660px;top:275.5px;width:320px;height:20.5px;border:1px solid #bcbcbc;border-radius:3px;box-sizing:border-box;background:#fff;"></div>
<div class="b" style="left:961px;top:276px;width:1px;height:19px;background:#c8c8c8;"></div>
<svg class="b" style="left:966.5px;top:283px;" width="7" height="4" viewBox="0 0 7 4"><path d="M0.5 0.5 L6.5 0.5 L3.5 3.5 Z" fill="#333"/></svg>
<div class="t " style="left:663.5px;top:279.28px;font-size:10.8px;line-height:12.96px;color:#333;font-weight:normal;">Характеристика</div>
<div class="t " style="left:592.4px;top:307.38px;font-size:10.8px;line-height:12.96px;color:#4d4d4d;font-weight:normal;"><u>Ч</u>то искать:</div>
<div class="b" style="left:592px;top:325px;width:52px;height:3px;background:#f00;"></div>
<div class="b" style="left:657px;top:301px;width:325px;height:25px;border:2px solid #f3c200;box-sizing:border-box;background:#fff;"></div>
<div class="t " style="left:663.3px;top:307.28px;font-size:10.8px;line-height:12.96px;color:#333;font-weight:normal;">C3</div>
<div class="t " style="left:592.4px;top:338.78px;font-size:10.8px;line-height:12.96px;color:#4d4d4d;font-weight:normal;">Как искать:</div>
<svg class="b" style="left:660px;top:337.3px;" width="14" height="14" viewBox="0 0 14 14"><circle cx="7" cy="7" r="6" fill="#fff" stroke="#a9a9a9" stroke-width="1"/></svg>
<div class="t " style="left:678.2px;top:332.28px;font-size:10.8px;line-height:12.96px;color:#4d4d4d;font-weight:normal;">По началу</div>
<div class="t " style="left:678.2px;top:345.28px;font-size:10.8px;line-height:12.96px;color:#4d4d4d;font-weight:normal;">строки</div>
<svg class="b" style="left:761.2px;top:337.3px;" width="14" height="14" viewBox="0 0 14 14"><circle cx="7" cy="7" r="6" fill="#fff" stroke="#a9a9a9" stroke-width="1"/><circle cx="7" cy="7" r="2" fill="#1e9a50"/></svg>
<div class="t " style="left:779.5px;top:332.28px;font-size:10.8px;line-height:12.96px;color:#4d4d4d;font-weight:normal;">По части</div>
<div class="t " style="left:779.5px;top:345.28px;font-size:10.8px;line-height:12.96px;color:#4d4d4d;font-weight:normal;">строки</div>
<svg class="b" style="left:856px;top:337.3px;" width="14" height="14" viewBox="0 0 14 14"><circle cx="7" cy="7" r="6" fill="#fff" stroke="#a9a9a9" stroke-width="1"/></svg>
<div class="t " style="left:874.5px;top:332.28px;font-size:10.8px;line-height:12.96px;color:#4d4d4d;font-weight:normal;">По точному</div>
<div class="t " style="left:874.5px;top:345.28px;font-size:10.8px;line-height:12.96px;color:#4d4d4d;font-weight:normal;">совпадению</div>
<svg class="b" style="left:985.5px;top:281px;" width="8" height="6" viewBox="0 0 8 6"><path d="M0.5 5 L4 1 L7.5 5 Z" fill="#c8c8c8"/></svg>
<div class="b" style="left:986.5px;top:294.5px;width:5.5px;height:70.5px;background:#d3d3d3;border-radius:3px;"></div>
<div class="b" style="left:986.5px;top:294.5px;width:5.5px;height:56.5px;background:#9a9a9a;border-radius:3px;"></div>
<svg class="b" style="left:986px;top:373.5px;" width="7" height="5" viewBox="0 0 7 5"><path d="M0.8 0.3 L6.2 0.3 L3.5 3.8 Z" fill="#444"/></svg>
<div class="b" style="left:812px;top:393px;width:55px;height:21px;background:linear-gradient(#ffe94a,#f2c900);border:1px solid #c9a800;border-bottom-color:#b09000;border-radius:3px;box-shadow:0 1px 0 rgba(0,0,0,0.15);box-sizing:border-box;"></div>
<div class="t" style="left:639.5px;width:400px;text-align:center;top:397.09px;font-size:11px;line-height:13.2px;color:#333;font-weight:bold;"><u>Н</u>айти</div>
<div class="b" style="left:874.5px;top:393px;width:63.5px;height:21px;background:linear-gradient(#ffffff,#ececec);border:1px solid #c4c4c4;border-bottom-color:#a9a9a9;border-radius:3px;box-shadow:0 1px 0 rgba(0,0,0,0.12);box-sizing:border-box;"></div>
<div class="t" style="left:706px;width:400px;text-align:center;top:397.28px;font-size:10.8px;line-height:12.96px;color:#444;font-weight:normal;">Закрыть</div>
<div class="b" style="left:955px;top:393px;width:24.5px;height:21px;background:linear-gradient(#ffffff,#ececec);border:1px solid #c4c4c4;border-bottom-color:#a9a9a9;border-radius:3px;box-shadow:0 1px 0 rgba(0,0,0,0.12);box-sizing:border-box;"></div>
<div class="t" style="left:767.3px;width:400px;text-align:center;top:395.90px;font-size:13px;line-height:15.6px;color:#111;font-weight:normal;-webkit-text-stroke:0.3px #111;">?</div>
</body></html>
